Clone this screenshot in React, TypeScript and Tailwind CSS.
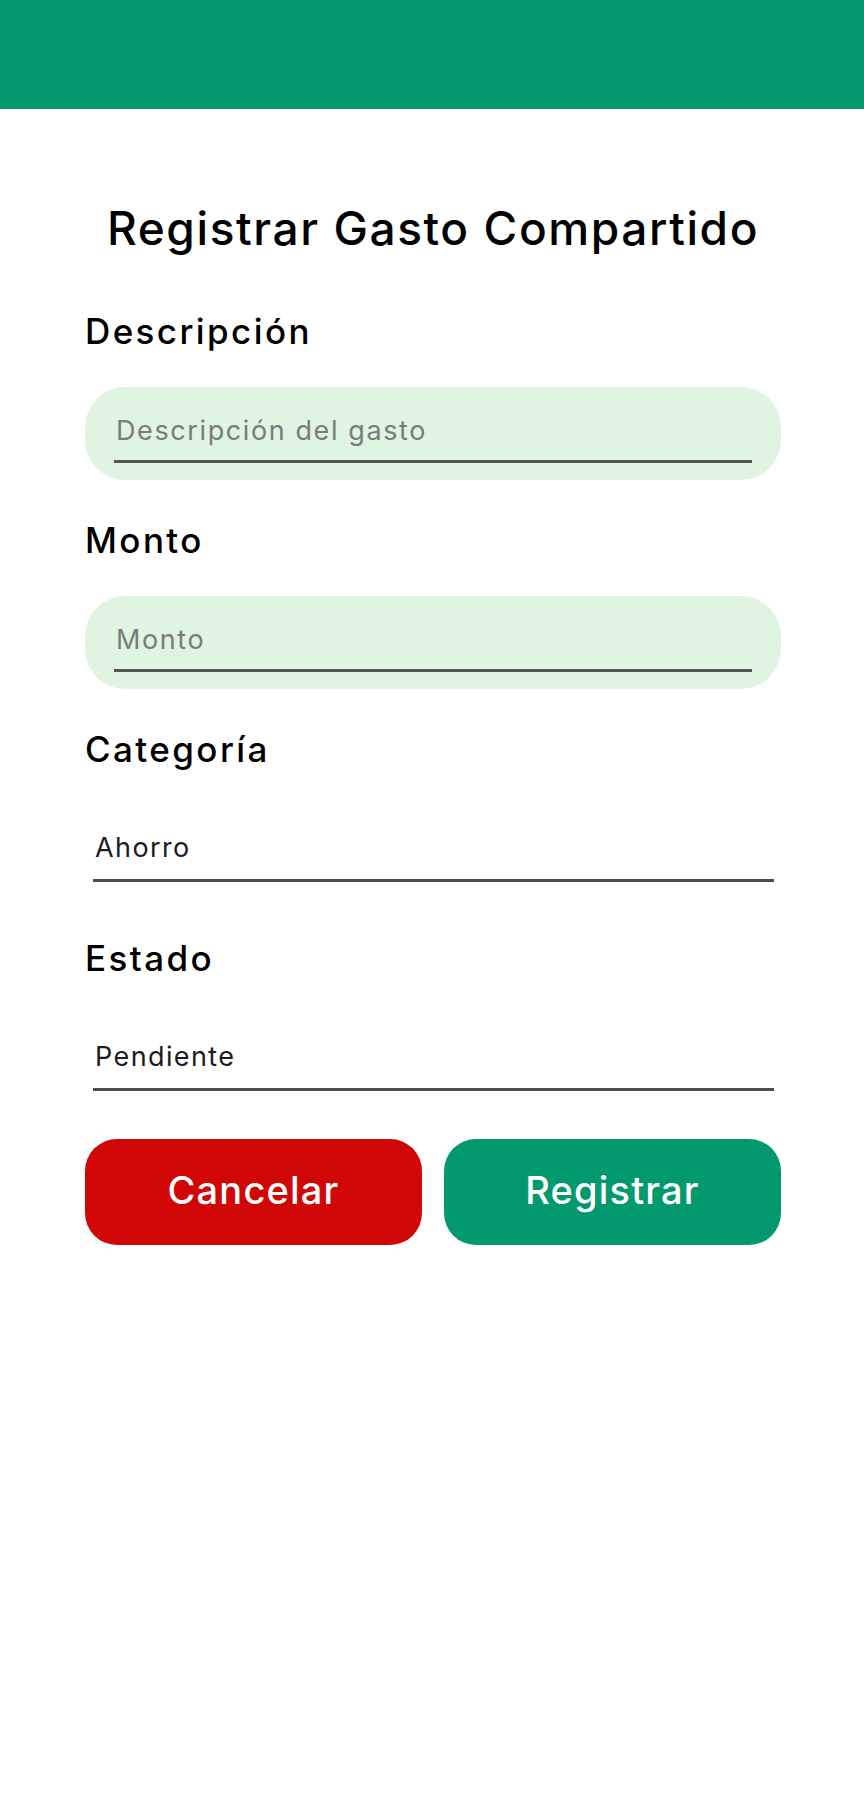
import { useState } from "react";

interface TextField {
  label: string;
  placeholder: string;
}

interface PickerField {
  label: string;
  value: string;
}

const TEXT_FIELDS: TextField[] = [
  { label: "Descripción", placeholder: "Descripción del gasto" },
  { label: "Monto", placeholder: "Monto" },
];

const PICKER_FIELDS: PickerField[] = [
  { label: "Categoría", value: "Ahorro" },
  { label: "Estado", value: "Pendiente" },
];

function FieldLabel({ children, className }: { children: string; className: string }) {
  return (
    <div
      className={`text-[35px] font-medium leading-[40px] tracking-[2.4px] text-black ${className}`}
    >
      {children}
    </div>
  );
}

export default function App() {
  const [values, setValues] = useState<Record<string, string>>({});

  return (
    <div className="min-h-[1818px] bg-white font-['Inter',sans-serif]">
      {/* top app bar */}
      <div className="h-[109px] bg-[#02996e]" />

      <div className="flex flex-col pl-[85px] pr-[83px]">
        <h1 className="mt-[91px] text-center text-[46px] font-medium leading-[56px] tracking-[1.6px] text-black">
          Registrar Gasto Compartido
        </h1>

        {/* text inputs */}
        {TEXT_FIELDS.map((field, i) => (
          <div key={field.label} className="flex flex-col">
            <FieldLabel className={i === 0 ? "mt-[55px]" : "mt-[40px]"}>
              {field.label}
            </FieldLabel>
            <div className="mt-[36px] flex h-[93px] flex-col justify-end rounded-[40px] bg-[#dff5e1] px-[29px] pb-[17px]">
              <input
                value={values[field.label] ?? ""}
                onChange={(e) =>
                  setValues({ ...values, [field.label]: e.target.value })
                }
                placeholder={field.placeholder}
                className="w-full border-b-[3px] border-[#555555] bg-transparent pb-[13px] pl-[2px] text-[27px] leading-[32px] tracking-[1.6px] text-[#1c1b1f] outline-none placeholder:text-[#7b7b7b]"
              />
            </div>
          </div>
        ))}

        {/* dropdown pickers */}
        {PICKER_FIELDS.map((field, i) => (
          <div key={field.label} className="flex flex-col">
            <FieldLabel className={i === 0 ? "mt-[40px]" : "mt-[56px]"}>
              {field.label}
            </FieldLabel>
            <div
              className={`ml-[8px] mr-[7px] mt-[63px] border-b-[3px] border-[#4f4e56] pb-[15px] pl-[2px] text-[27px] leading-[32px] tracking-[1.4px] text-[#1c1b1f]`}
            >
              {field.value}
            </div>
          </div>
        ))}

        {/* actions */}
        <div className="mt-[48px] grid grid-cols-2 gap-[22px]">
          <button className="h-[106px] rounded-[32px] bg-[#d10606] pb-[4px] text-[38px] font-medium tracking-[1.2px] text-white">
            Cancelar
          </button>
          <button className="h-[106px] rounded-[32px] bg-[#02996e] pb-[4px] text-[38px] font-medium tracking-[1.2px] text-white">
            Registrar
          </button>
        </div>
      </div>
    </div>
  );
}
